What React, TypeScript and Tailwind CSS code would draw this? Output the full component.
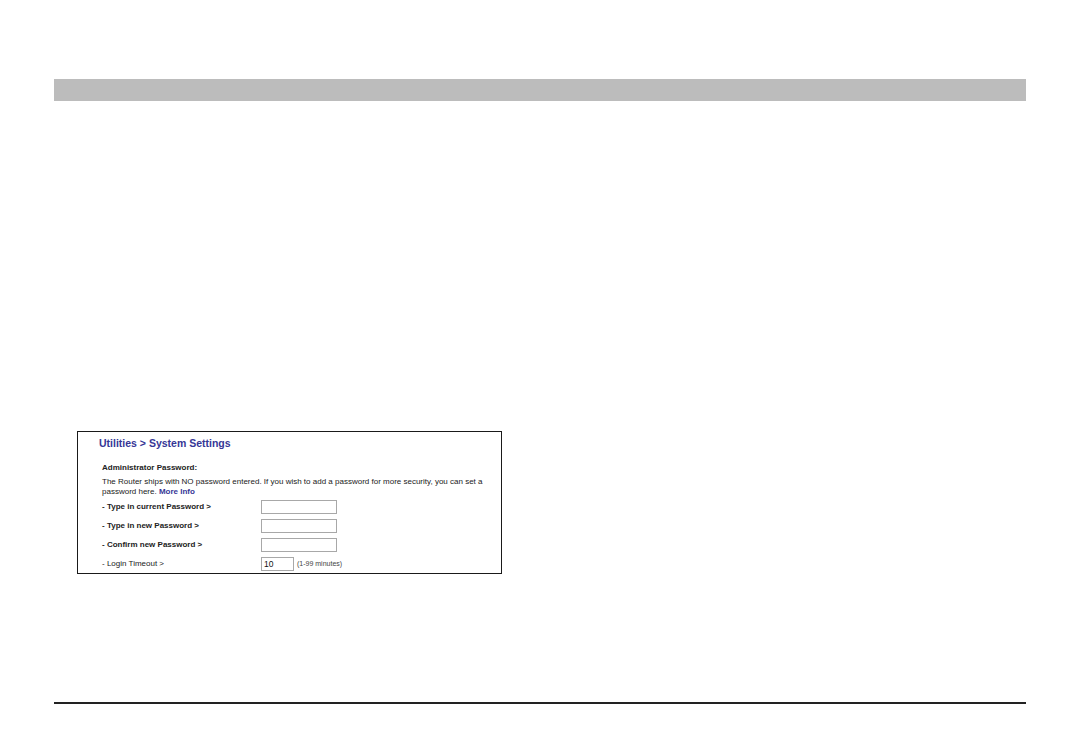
import React from 'react';

const rows = [
  { label: '- Type in current Password >' },
  { label: '- Type in new Password >' },
  { label: '- Confirm new Password >' },
];

export default function App() {
  return (
    <div
      className="w-[1080px] h-[756px] bg-white flex flex-col px-[54px] pt-[79px]"
      style={{ fontFamily: '"Liberation Sans", Arial, sans-serif' }}
    >
      <div className="h-[22px] bg-[#bcbcbc]" />

      <div className="mt-[330px] ml-[23px] w-[425px] h-[143px] border border-[#1a1a1a] pl-[21px] pr-2 pt-[5px]">
        <div className="text-[10.5px] font-bold text-[#363696] leading-[13px]">Utilities &gt; System Settings</div>

        <div className="pl-[3px] mt-[13px]">
          <div className="text-[8px] font-bold text-[#222] leading-[10px]">Administrator Password:</div>
          <p className="text-[8px] text-[#222] leading-[10px] mt-[4px] w-[388px]">
            The Router ships with NO password entered. If you wish to add a password for more security, you can set a
            password here. <span className="text-[#363696] font-bold">More Info</span>
          </p>

          <div className="flex flex-col gap-[5px] mt-[3px]">
            {rows.map((r) => (
              <div key={r.label} className="flex items-center h-[14px]">
                <span className="w-[159px] text-[8px] font-bold text-[#222]">{r.label}</span>
                <div className="w-[76px] h-[14px] border border-[#a8a8a8] bg-white" />
              </div>
            ))}
            <div className="flex items-center h-[14px]">
              <span className="w-[159px] text-[8px] text-[#222]">- Login Timeout &gt;</span>
              <div className="w-[33px] h-[14px] border border-[#a8a8a8] bg-white text-[8.5px] text-[#111] pl-[2px] leading-[12px]">
                10
              </div>
              <span className="ml-[3px] text-[7px] text-[#444]">(1-99 minutes)</span>
            </div>
          </div>
        </div>
      </div>

      <div className="mt-[128px] h-[1.5px] bg-[#222]" />
    </div>
  );
}
